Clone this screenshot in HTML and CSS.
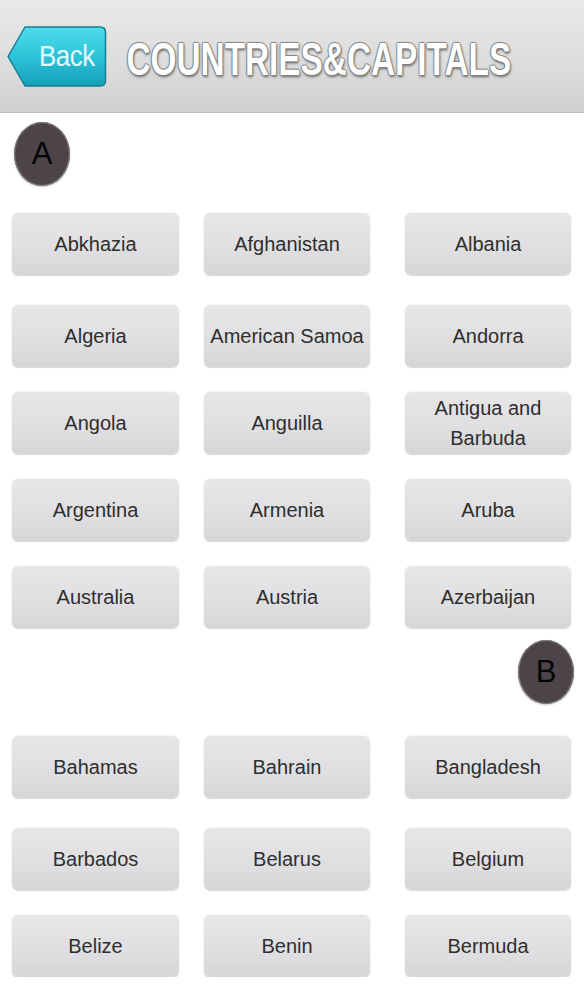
FILE: index.html
```html
<!DOCTYPE html>
<html lang="en">
<head>
<meta charset="utf-8">
<title>Countries &amp; Capitals</title>
<link rel="stylesheet" href="styles.css">
</head>
<body>
<header class="topbar">
  <button class="back">
    <svg class="back-shape" width="100" height="61" viewBox="0 0 100 61" aria-hidden="true">
      <defs>
        <linearGradient id="bg" x1="0" y1="0" x2="0" y2="1">
          <stop offset="0" stop-color="#4fdcec"/>
          <stop offset="0.5" stop-color="#2cc4d8"/>
          <stop offset="1" stop-color="#179fb8"/>
        </linearGradient>
      </defs>
      <path d="M1 30.5 L18 1 H93 Q98.5 1 98.5 6.5 V54.5 Q98.5 60 93 60 H18 Z" fill="url(#bg)" stroke="#177d90" stroke-width="1.5" stroke-linejoin="round"/>
    </svg>
    <span class="back-label">Back</span>
  </button>
  <h1 class="title"><span class="title-text">COUNTRIES&amp;CAPITALS</span></h1>
</header>

<main class="content">
  <section class="group">
    <div class="letter">A</div>
    <div class="grid">
      <div class="item">Abkhazia</div>
      <div class="item">Afghanistan</div>
      <div class="item">Albania</div>
      <div class="item">Algeria</div>
      <div class="item">American Samoa</div>
      <div class="item">Andorra</div>
      <div class="item">Angola</div>
      <div class="item">Anguilla</div>
      <div class="item">Antigua and<br>Barbuda</div>
      <div class="item">Argentina</div>
      <div class="item">Armenia</div>
      <div class="item">Aruba</div>
      <div class="item">Australia</div>
      <div class="item">Austria</div>
      <div class="item">Azerbaijan</div>
    </div>
  </section>

  <section class="group group-right">
    <div class="letter">B</div>
    <div class="grid">
      <div class="item">Bahamas</div>
      <div class="item">Bahrain</div>
      <div class="item">Bangladesh</div>
      <div class="item">Barbados</div>
      <div class="item">Belarus</div>
      <div class="item">Belgium</div>
      <div class="item">Belize</div>
      <div class="item">Benin</div>
      <div class="item">Bermuda</div>
    </div>
  </section>
</main>
</body>
</html>
```

FILE: styles.css
```css
* { box-sizing: border-box; }

html, body {
  margin: 0;
  padding: 0;
  background: #ffffff;
  font-family: "Liberation Sans", Arial, sans-serif;
}

body {
  width: 584px;
  overflow: hidden;
}

.topbar {
  height: 113px;
  display: flex;
  align-items: flex-start;
  padding: 26px 0 0 7px;
  background: linear-gradient(#e9e9e9 0%, #dddddd 55%, #d0d0d0 100%);
  border-bottom: 1px solid #c2c2c2;
}

.back {
  position: relative;
  width: 100px;
  height: 61px;
  padding: 0 0 0 28px;
  margin: 0;
  border: 0;
  background: transparent;
  display: flex;
  align-items: center;
  cursor: pointer;
}

.back-shape {
  position: absolute;
  left: 0;
  top: 0;
}

.back-label {
  position: relative;
  font-family: "Liberation Sans", Arial, sans-serif;
  font-size: 30px;
  color: #e4fbff;
  letter-spacing: -0.5px;
  transform: scaleX(0.86);
  transform-origin: left center;
  margin-left: 4px;
  margin-top: -2px;
}

.title {
  margin: 8px 0 0 18px;
  width: 400px;
  height: 52px;
  overflow: hidden;
  white-space: nowrap;
  font-family: "Liberation Sans", Arial, sans-serif;
  font-weight: bold;
  font-size: 46px;
  line-height: 50px;
  color: #ffffff;
}

.title-text {
  display: inline-block;
  padding: 0 2px;
  transform: scaleX(0.725);
  transform-origin: left center;
  text-shadow:
    0 0 1px #666,
    1px 0 1px #888,
    -1px 0 1px #888,
    0 1px 1px #888,
    0 -1px 1px #888,
    1px 2px 3px #666;
}

.content {
  display: flex;
  flex-direction: column;
}

.group {
  display: flex;
  flex-direction: column;
}

.letter {
  width: 56px;
  height: 64px;
  border-radius: 50%;
  background: #4c4448;
  box-shadow: 0 0 1px 1px #8a8587 inset, 0 1px 2px rgba(0,0,0,0.25);
  color: #050505;
  font-size: 31px;
  display: flex;
  align-items: center;
  justify-content: center;
  margin: 9px 0 27px 14px;
}

.group-right .letter {
  align-self: flex-end;
  margin: 12px 10px 32px 0;
}

.grid {
  display: grid;
  grid-template-columns: 167px 166px 176px;
  column-gap: 25px;
  row-gap: 25px;
  padding: 0 13px 0 12px;
}

.item {
  height: 62px;
  border-radius: 6px;
  background: linear-gradient(#e7e7e9 0%, #dfdfe1 60%, #d6d6d8 100%);
  box-shadow: 0 1px 1px rgba(0,0,0,0.12), 0 0 0 1px rgba(0,0,0,0.03);
  color: #2e2e2e;
  font-size: 20px;
  line-height: 30px;
  text-align: center;
  display: flex;
  align-items: center;
  justify-content: center;
  padding: 0 2px;
}

.item:nth-child(3n) {
  width: 166px;
  justify-self: end;
}

.item:nth-child(-n+3) {
  margin-bottom: 5px;
}
```
